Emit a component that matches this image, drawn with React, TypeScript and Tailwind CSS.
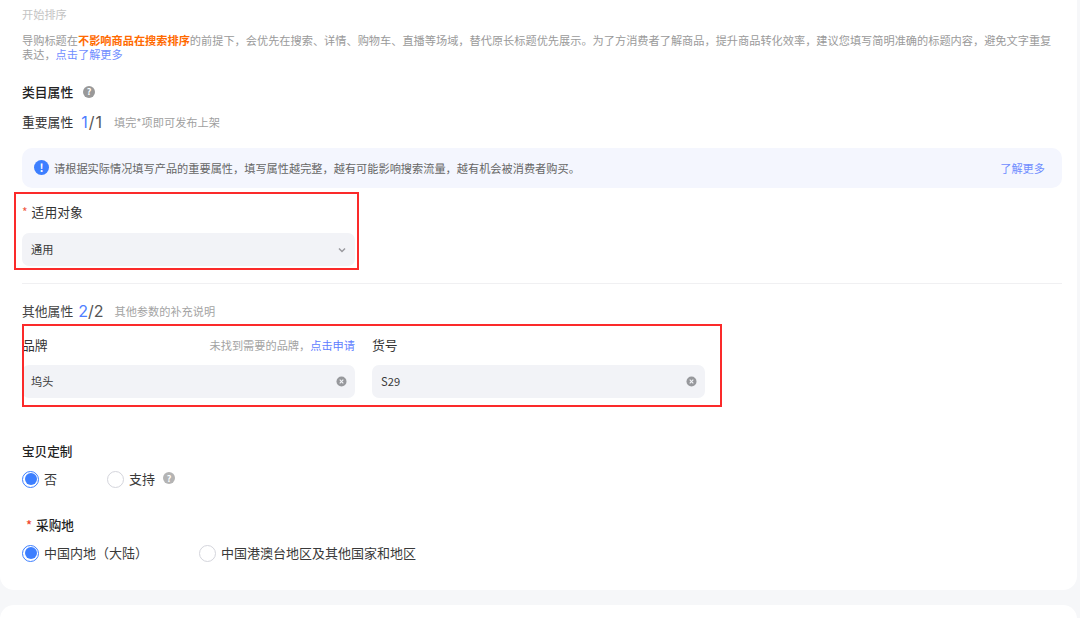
import React from "react";

const font = { fontFamily: '"Noto Sans CJK SC", "Noto Sans", sans-serif' };

function Help({ className }: { className: string }) {
  return (
    <span className={`inline-flex items-center justify-center rounded-full text-white font-bold text-[9px] leading-none w-[12px] h-[12px] ${className}`}>?</span>
  );
}

function Clear() {
  return (
    <svg width="11" height="11" viewBox="0 0 11 11" className="shrink-0">
      <circle cx="5.5" cy="5.5" r="5" fill="#97989c" />
      <path d="M3.7 3.7l3.6 3.6M7.3 3.7l-3.6 3.6" stroke="#f2f3f7" strokeWidth="1.1" />
    </svg>
  );
}

function Radio({ on, label, className = "" }: { on?: boolean; label: string; className?: string }) {
  return (
    <div className={`flex items-center gap-[5px] text-[13px] text-[#3a3a3a] ${className}`}>
      {on ? (
        <span className="w-[17px] h-[17px] rounded-full border border-[#3d7fff] flex items-center justify-center">
          <span className="w-[12px] h-[12px] rounded-full bg-[#3d7fff]" />
        </span>
      ) : (
        <span className="w-[17px] h-[17px] rounded-full border border-[#d4d5dc] bg-white" />
      )}
      <span className="leading-[18px]">{label}</span>
    </div>
  );
}

function Field({ value }: { value: string }) {
  return (
    <div className="h-[33px] rounded-[7px] bg-[#f2f3f7] flex items-center justify-between pl-[9px] pr-[8px] text-[11.2px] text-[#3a3a3a]">
      <span>{value}</span>
      <Clear />
    </div>
  );
}

export default function App() {
  return (
    <div style={font} className="relative w-[1080px] h-[618px] overflow-hidden bg-[#f6f7f9]">
      <div className="w-[1077px] h-[590px] bg-white rounded-b-[14px] pl-[22px] pr-[15px] pt-[7px]">
        <div className="text-[11.2px] leading-[14px] text-[#c4c4c4]">开始排序</div>
        <p className="mt-[12px] text-[11.2px] leading-[14px] text-[#9a9a9a] whitespace-nowrap">
          导购标题在<b className="text-[#ff6a00] font-bold">不影响商品在搜索排序</b>的前提下，会优先在搜索、详情、购物车、直播等场域，替代原长标题优先展示。为了方消费者了解商品，提升商品转化效率，建议您填写简明准确的标题内容，避免文字重复
          <br />
          表达，<span className="text-[#6f8dff]">点击了解更多</span>
        </p>

        <div className="mt-[22px] flex items-center gap-[10px] h-[18px]">
          <span className="text-[12.8px] font-medium text-[#222]">类目属性</span>
          <Help className="bg-[#999] -mt-[1px]" />
        </div>
        <div className="mt-[12px] flex items-center h-[18px]">
          <span className="text-[12.8px] text-[#333]">重要属性</span>
          <span className="ml-[8px] text-[16px] tracking-[1px] text-[#555] [font-family:Inter,sans-serif]"><span className="text-[#4f7dff]">1</span>/1</span>
          <span className="ml-[11px] text-[11.2px] text-[#9f9f9f]">填完*项即可发布上架</span>
        </div>

        <div className="mt-[17px] h-[40px] rounded-[10px] bg-[#f4f6fe] flex items-center justify-between pl-[12px] pr-[17px]">
          <div className="flex items-center gap-[5px] text-[11.2px] text-[#666]">
            <span className="w-[15px] h-[15px] rounded-full bg-[#3d7fff] text-white text-[11px] font-bold flex items-center justify-center leading-none">!</span>
            请根据实际情况填写产品的重要属性，填写属性越完整，越有可能影响搜索流量，越有机会被消费者购买。
          </div>
          <span className="text-[11.2px] text-[#6f8dff]">了解更多</span>
        </div>

        <div className="mt-[15px] flex items-center h-[18px] text-[12.8px] text-[#333]">
          <span className="text-[#f0573f] text-[12px] mr-[4px]">*</span>适用对象
        </div>
        <div className="mt-[12px] w-[333px] h-[33px] rounded-[7px] bg-[#f2f3f7] flex items-center justify-between pl-[9px] pr-[8px] text-[11.2px] text-[#3a3a3a]">
          <span>通用</span>
          <svg width="10" height="10" viewBox="0 0 10 10">
            <path d="M2 3.5l3 3 3-3" fill="none" stroke="#9a9a9f" strokeWidth="1.5" />
          </svg>
        </div>

        <div className="mt-[17px] h-px bg-[#f0f0f2]" />

        <div className="mt-[18px] flex items-center h-[18px]">
          <span className="text-[12.8px] text-[#444]">其他属性</span>
          <span className="ml-[5px] text-[16px] text-[#555] [font-family:Inter,sans-serif]"><span className="text-[#4f7dff]">2</span>/2</span>
          <span className="ml-[11px] text-[11.2px] text-[#a3a3a3]">其他参数的补充说明</span>
        </div>

        <div className="mt-[16px] flex gap-[17px]">
          <div className="w-[333px]">
            <div className="flex items-center justify-between h-[18px]">
              <span className="text-[12.8px] text-[#333]">品牌</span>
              <span className="text-[11.2px] text-[#a3a3a3]">未找到需要的品牌，<span className="text-[#5f80ff]">点击申请</span></span>
            </div>
            <div className="mt-[11px]"><Field value="坞头" /></div>
          </div>
          <div className="w-[333px]">
            <div className="flex items-center h-[18px] text-[12.8px] text-[#333]">货号</div>
            <div className="mt-[11px]"><Field value="S29" /></div>
          </div>
        </div>

        <div className="mt-[44px] h-[18px] flex items-center text-[12.6px] font-medium text-[#222]">宝贝定制</div>
        <div className="mt-[10px] flex items-center h-[18px]">
          <Radio on label="否" className="w-[85px]" />
          <Radio label="支持" />
          <Help className="bg-[#b4b4b4] ml-[8px] -mt-[2px]" />
        </div>

        <div className="mt-[28px] h-[18px] flex items-center text-[12.6px] font-medium text-[#222] pl-[4px]">
          <span className="text-[#f0492f] mr-[4px]">*</span>采购地
        </div>
        <div className="mt-[10px] flex items-center h-[18px]">
          <Radio on label="中国内地（大陆）" className="w-[177px]" />
          <Radio label="中国港澳台地区及其他国家和地区" />
        </div>
      </div>

      <div className="mt-[15px] w-[1077px] h-[40px] bg-white rounded-t-[14px]" />

      <div className="absolute left-[14px] top-[192px] w-[345px] h-[78px] border-2 border-[#fb2a2a] pointer-events-none" />
      <div className="absolute left-[22px] top-[324px] w-[700px] h-[83px] border-2 border-[#fb2a2a] pointer-events-none" />
    </div>
  );
}
